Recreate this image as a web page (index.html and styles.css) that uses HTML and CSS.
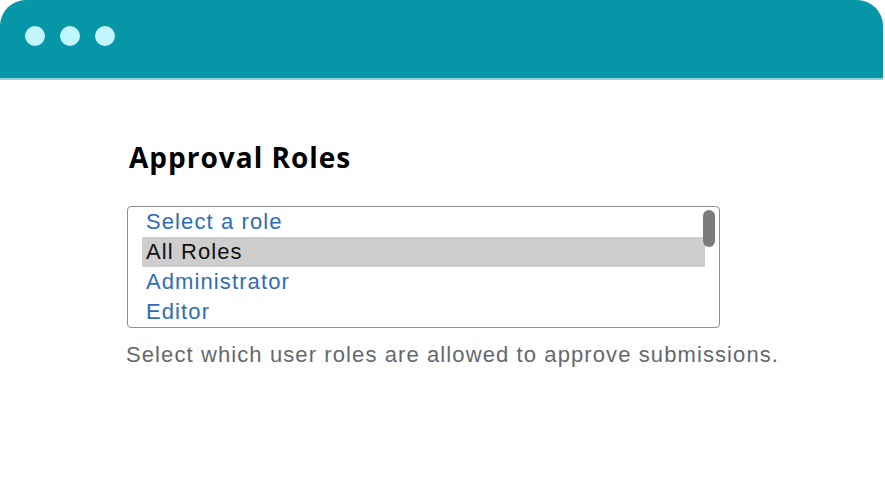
FILE: index.html
```html
<!DOCTYPE html>
<html lang="en">
<head>
    <meta charset="UTF-8">
    <meta name="viewport" content="width=device-width, initial-scale=1.0">
    <title>Approval Roles</title>
    <link rel="stylesheet" href="styles.css">
</head>
<body>
    <!-- window frame -->
    <div class="window">
        <div class="titlebar">
            <span class="dot"></span>
            <span class="dot"></span>
            <span class="dot"></span>
        </div>

        <!-- settings field -->
        <div class="content">
            <h2 class="field-title">Approval Roles</h2>
            <div class="role-list">
                <div class="options">
                    <div class="option">Select a role</div>
                    <div class="option selected">All Roles</div>
                    <div class="option">Administrator</div>
                    <div class="option">Editor</div>
                </div>
                <div class="scroll-thumb"></div>
            </div>
            <p class="description">Select which user roles are allowed to approve submissions.</p>
        </div>
    </div>
</body>
</html>
```

FILE: styles.css
```css
/* base */
body {
    margin: 0;
    padding: 0;
    background-color: #fff;
    font-family: "Liberation Sans", Arial, sans-serif;
}

.window {
    width: 883px;
    height: 485px;
    background: #fff;
}

/* title bar */
.titlebar {
    height: 80px;
    background-color: #0596a8;
    border-radius: 26px 26px 0 0;
    border-bottom: 2px solid #8dd6de;
    display: flex;
    align-items: center;
    gap: 15px;
    padding-left: 25px;
    padding-bottom: 6px;
    box-sizing: border-box;
}

.dot {
    width: 20px;
    height: 20px;
    border-radius: 50%;
    background-color: #c1f6fc;
}

/* content */
.content {
    padding-left: 127px;
}

.field-title {
    font-family: "Open Sans", sans-serif;
    font-weight: 700;
    font-size: 28px;
    line-height: 36px;
    letter-spacing: 1px;
    color: #000;
    margin: 59px 0 0 2px;
}

.role-list {
    position: relative;
    width: 563px;
    height: 120px;
    border: 1px solid #8c8f94;
    border-radius: 4px;
    margin-top: 31px;
    padding: 0 14px;
}

.option {
    height: 30px;
    line-height: 30px;
    font-size: 22px;
    letter-spacing: 1.1px;
    color: #2f6db3;
    padding-left: 4px;
}

.option.selected {
    background-color: #cecece;
    color: #111;
}

.scroll-thumb {
    position: absolute;
    top: 3px;
    right: 4px;
    width: 12px;
    height: 37px;
    border-radius: 6px;
    background-color: #7b7b7b;
}

.description {
    font-size: 22px;
    line-height: 30px;
    letter-spacing: 1.1px;
    color: #646970;
    margin: 12px 0 0 -1px;
}
```
